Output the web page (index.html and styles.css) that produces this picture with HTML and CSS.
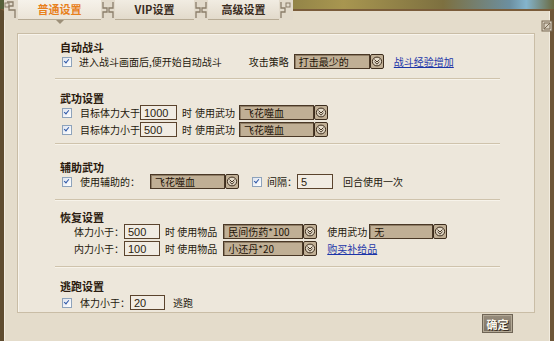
FILE: index.html
```html
<!DOCTYPE html>
<html lang="zh-CN">
<head>
    <meta charset="UTF-8">
    <title>普通设置</title>
    <link rel="stylesheet" href="styles.css">
</head>
<body>

<div class="window">
    <div class="tabs">
        <div class="tab-deco"><svg width="14" height="20" viewBox="0 0 14 20"><path d="M3 2h6v4H5v4h6v8" fill="none" stroke="#8a7d6a" stroke-width="1.3"/><rect x="1" y="3" width="4" height="4" fill="none" stroke="#8a7d6a"/></svg></div>
        <div class="tab active">普通设置<span class="pointer"></span></div>
        <div class="tab-deco"><svg width="14" height="20" viewBox="0 0 14 20"><path d="M2 2v6h4v4H2v6M12 2v6H8v4h4v6" fill="none" stroke="#8a7d6a" stroke-width="1.3"/></svg></div>
        <div class="tab">VIP设置</div>
        <div class="tab-deco"><svg width="14" height="20" viewBox="0 0 14 20"><path d="M2 2v6h4v4H2v6M12 2v6H8v4h4v6" fill="none" stroke="#8a7d6a" stroke-width="1.3"/></svg></div>
        <div class="tab">高级设置</div>
        <div class="tab-deco"><svg width="14" height="20" viewBox="0 0 14 20"><path d="M2 2v6h4v4H2v6" fill="none" stroke="#8a7d6a" stroke-width="1.3"/><rect x="7" y="3" width="4" height="4" fill="none" stroke="#8a7d6a"/></svg></div>
    </div>

    <div class="frame">
        <span class="corner-tr"><svg width="12" height="12" viewBox="0 0 12 12"><rect x="1" y="1" width="10" height="10" fill="#d8cfbf" stroke="#7a6a55"/><path d="M3 3h6v6H3z M3 9l6-6" fill="none" stroke="#7a6a55"/></svg></span>

        <div class="panel">
            <div class="section s1">
                <div class="heading">自动战斗</div>
                <div class="row">
                    <span class="check"></span>
                    <span class="label ml7">进入战斗画面后,便开始自动战斗</span>
                    <span class="label ml27">攻击策略</span>
                    <div class="select ml5 w76"><span>打击最少的</span></div>
                    <span class="drop"></span>
                    <a class="link ml10" href="#">战斗经验增加</a>
                </div>
            </div>

            <div class="section s2">
                <div class="heading">武功设置</div>
                <div class="row">
                    <span class="check"></span>
                    <span class="label ml8">目标体力大于</span>
                    <input class="num w37" type="text" value="1000">
                    <span class="label ml5">时</span>
                    <span class="label ml3">使用武功</span>
                    <div class="select ml4 w75"><span>飞花噬血</span></div>
                    <span class="drop"></span>
                </div>
                <div class="row">
                    <span class="check"></span>
                    <span class="label ml8">目标体力小于</span>
                    <input class="num w37" type="text" value="500">
                    <span class="label ml5">时</span>
                    <span class="label ml3">使用武功</span>
                    <div class="select ml4 w75"><span>飞花噬血</span></div>
                    <span class="drop"></span>
                </div>
            </div>

            <div class="section s3">
                <div class="heading">辅助武功</div>
                <div class="row">
                    <span class="check"></span>
                    <span class="label ml8">使用辅助的：</span>
                    <div class="select ml10 w75"><span>飞花噬血</span></div>
                    <span class="drop"></span>
                    <span class="check ml13"></span>
                    <span class="label ml5">间隔：</span>
                    <input class="num w36" type="text" value="5">
                    <span class="label ml10">回合使用一次</span>
                </div>
            </div>

            <div class="section s4">
                <div class="heading">恢复设置</div>
                <div class="row">
                    <span class="label ml12">体力小于：</span>
                    <input class="num w36" type="text" value="500">
                    <span class="label ml5">时 使用物品</span>
                    <div class="select ml6 w80"><span>民间伤药*100</span></div>
                    <span class="drop"></span>
                    <span class="label ml10">使用武功</span>
                    <div class="select ml2 w64"><span>无</span></div>
                    <span class="drop"></span>
                </div>
                <div class="row">
                    <span class="label ml12">内力小于：</span>
                    <input class="num w36" type="text" value="100">
                    <span class="label ml5">时 使用物品</span>
                    <div class="select ml6 w80"><span>小还丹*20</span></div>
                    <span class="drop"></span>
                    <a class="link ml10" href="#">购买补给品</a>
                </div>
            </div>

            <div class="section s5">
                <div class="heading">逃跑设置</div>
                <div class="row">
                    <span class="check"></span>
                    <span class="label ml8">体力小于：</span>
                    <input class="num w35" type="text" value="20">
                    <span class="label ml8">逃跑</span>
                </div>
            </div>
        </div>

        <div class="footer">
            <button class="ok-btn">确定</button>
        </div>
    </div>
</div>

</body>
</html>
```

FILE: styles.css
```css
body {
    margin: 0;
    padding: 0;
    font-family: "Noto Sans CJK SC", "Liberation Sans", sans-serif;
    background: #e4dccb;
}
.window {
    position: relative;
    width: 554px;
    height: 341px;
    overflow: hidden;
    background: linear-gradient(90deg, #56603a 0%, #6d6a3c 30%, #8c7f45 50%, #a89650 62%, #7d7040 80%, #6c8fa0 92%, #84b4cc 95%, #6a6a40 100%);
}
.tabs {
    position: relative;
    z-index: 2;
    display: flex;
    height: 20px;
    padding-left: 4px;
}
.tab-deco {
    width: 14px;
    height: 20px;
    background: #e2dacb;
}
.tab {
    position: relative;
    height: 19px;
    line-height: 18px;
    font-size: 11px;
    font-weight: bold;
    color: #3a2c1e;
    text-align: center;
    background: linear-gradient(#f1ece2, #e2dacb);
    border-bottom: 1px solid #b7ab95;
}
.tab:nth-child(2) { width: 83px; }
.tab:nth-child(4) { width: 79px; }
.tab:nth-child(6) { width: 71px; }
.tab.active {
    color: #e8801c;
    background: linear-gradient(#f6f2ea, #ebe4d7);
}
.pointer {
    position: absolute;
    left: 38px;
    bottom: -5px;
    width: 0;
    height: 0;
    border-left: 4px solid transparent;
    border-right: 4px solid transparent;
    border-top: 4px solid #9c8f78;
}
.frame {
    position: relative;
    margin-top: -11px;
    height: 313px;
    padding: 22px 15px 2px 13px;
    background: #e4dccb;
    border-top: 2px solid #7a5c3a;
    border-left: 4px solid #5f4c30;
    border-right: 4px solid #6e5638;
    border-bottom: 7px double #6b4f33;
    box-shadow: inset 1px 0 0 #f2ece0, inset -1px 0 0 #f2ece0;
}
.corner-tr {
    position: absolute;
    right: -3px;
    top: 2px;
    width: 12px;
    height: 12px;
}
.panel {
    height: 278px;
    background: #ede7db;
    border: 1px solid #c9bda6;
    box-shadow: inset 1px 1px 0 #f8f4ec;
}
.section {
    margin: 0 34px 0 37px;
    border-bottom: 1px solid #cfc3ac;
    box-shadow: 0 1px 0 #f7f3ea;
}
.s1 { padding: 7px 0 8px; }
.s2 { padding: 13px 0 5px; }
.s3 { padding: 17px 0 9px; }
.s4 { padding: 11px 0 9px; }
.s5 { padding: 13px 0 1px; border-bottom: none; box-shadow: none; }
.s5 .row { margin-top: 2px; }
.heading {
    height: 12px;
    line-height: 12px;
    padding-left: 5px;
    font-size: 11px;
    font-weight: bold;
    color: #2a1a0e;
}
.row {
    display: flex;
    align-items: center;
    height: 17px;
    padding-left: 7px;
    font-size: 10px;
    color: #24180c;
}
.label {
    white-space: nowrap;
    line-height: 12px;
}
.check {
    flex: none;
    width: 8px;
    height: 8px;
    border: 1px solid #8ea3bb;
    background: linear-gradient(135deg, #dfe4ee, #ffffff);
    position: relative;
}
.check::after {
    content: "";
    position: absolute;
    left: 2px;
    top: 0px;
    width: 2px;
    height: 4px;
    border-right: 1.5px solid #2f58a8;
    border-bottom: 1.5px solid #2f58a8;
    transform: rotate(40deg);
}
.num {
    box-sizing: border-box;
    height: 15px;
    margin: 0;
    padding: 1px 0 0 3px;
    border: 1px solid #5a432d;
    background: #f1ece3;
    font-family: "Liberation Sans", Arial, sans-serif;
    font-size: 11px;
    color: #2b1d10;
    outline: none;
}
.select {
    box-sizing: border-box;
    height: 15px;
    padding-left: 4px;
    background: #c0af95;
    border: 1px solid #4a3826;
    box-shadow: inset 1px 1px 0 #8f7d65;
    font-size: 10px;
    line-height: 13px;
    color: #1e1308;
    white-space: nowrap;
}
.drop {
    box-sizing: border-box;
    flex: none;
    width: 14px;
    height: 15px;
    border: 1px solid #3d2d1d;
    border-radius: 2px;
    background: #c0af95 url("data:image/svg+xml;utf8,<svg xmlns='http://www.w3.org/2000/svg' width='12' height='13' viewBox='0 0 12 13'><ellipse cx='6' cy='6.5' rx='4.6' ry='4.4' fill='%23e4dac8' stroke='%233d2d1d'/><path d='M3.5 4.6 L6 7 L8.5 4.6 M3.5 6.8 L6 9.2 L8.5 6.8' fill='none' stroke='%233d2d1d' stroke-width='1'/></svg>") center no-repeat;
}
.link {
    color: #1c35a8;
    text-decoration: underline;
    white-space: nowrap;
    line-height: 12px;
}
.footer {
    display: flex;
    justify-content: flex-end;
    padding-top: 2px;
    padding-right: 23px;
}
.ok-btn {
    width: 29px;
    height: 17px;
    padding: 0;
    border: 1px solid #b3a996;
    outline: 1px solid #6f6556;
    background: linear-gradient(#958b7b, #7e7465);
    color: #fbf7ef;
    font-family: "Noto Sans CJK SC", sans-serif;
    font-size: 11px;
    font-weight: bold;
    line-height: 14px;
    text-shadow: 1px 1px 0 #3a2e22;
}
.ml2 { margin-left: 2px; }
.ml3 { margin-left: 3px; }
.ml4 { margin-left: 4px; }
.ml5 { margin-left: 5px; }
.ml6 { margin-left: 6px; }
.ml7 { margin-left: 7px; }
.ml8 { margin-left: 8px; }
.ml10 { margin-left: 10px; }
.ml12 { margin-left: 12px; }
.ml13 { margin-left: 13px; }
.ml27 { margin-left: 27px; }
.w35 { width: 35px; }
.w36 { width: 36px; }
.w37 { width: 37px; }
.w64 { width: 64px; }
.w75 { width: 75px; }
.w76 { width: 76px; }
.w80 { width: 80px; }
```
